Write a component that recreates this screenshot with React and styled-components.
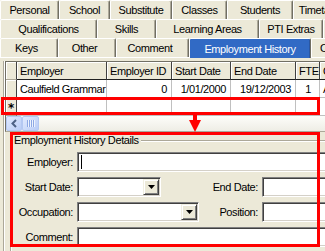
import styled, { createGlobalStyle } from 'styled-components';

const GlobalStyle = createGlobalStyle`
    html, body {
        margin: 0;
        padding: 0;
        background: #ECE9D8;
    }
    body {
        font-family: "Liberation Sans", Arial, sans-serif;
        font-size: 11px;
        letter-spacing: -0.4px;
        color: #000;
    }
    * {
        box-sizing: border-box;
    }
`;

const Screen = styled.div`
    position: relative;
    width: 325px;
    height: 251px;
    overflow: hidden;
    background: #ECE9D8;
`;

const TabStrip = styled.div`
    display: flex;
    flex-direction: column;
    width: 420px;
`;

const TabRow = styled.div`
    display: flex;
    height: 19px;
`;

const Tab = styled.div`
    flex: none;
    width: ${p => p.$w}px;
    height: ${p => p.$active ? 20 : 19}px;
    display: flex;
    align-items: center;
    justify-content: center;
    padding-right: ${p => p.$pr || 0}px;
    white-space: nowrap;
    overflow: hidden;
    background: ${p => p.$active ? '#316AC5' : '#ECE9D8'};
    color: ${p => p.$active ? '#fff' : '#000'};
    border-top: 1px solid #fff;
    border-left: 1px solid #fff;
    border-right: 1px solid #716F64;
    box-shadow: inset -1px 0 ${p => p.$active ? '#2A57A3' : '#ACA899'};
    border-radius: 2px 2px 0 0;
    position: relative;
    z-index: ${p => p.$active ? 1 : 0};
`;

const Panel = styled.div`
    border-top: 1px solid #fff;
    padding: 3px 0 0 3px;
`;

const Page = styled.div`
    border-left: 1px solid #ACA899;
    box-shadow: inset 1px 0 #fff;
    padding-left: 1px;
    height: 200px;
`;

const Sheet = styled.div`
    width: 420px;
    border-top: 1px solid #716F64;
    border-left: 1px solid #716F64;
    border-bottom: 1px solid #ACA899;
    background: #fff;
`;

const SheetRow = styled.div`
    display: grid;
    grid-template-columns: 11px 90px 65px 59px 65px 24px 80px;
    height: 18px;
`;

const HeadCell = styled.div`
    display: flex;
    align-items: center;
    padding-left: 3px;
    white-space: nowrap;
    overflow: hidden;
    background: #ECE9D8;
    border-right: 1px solid #404040;
    border-bottom: 1px solid #202020;
    box-shadow: inset 1px 1px #fff;
`;

const RowHead = styled.div`
    display: flex;
    align-items: center;
    justify-content: center;
    background: #ECE9D8;
    border-right: 1px solid #404040;
    border-bottom: 1px solid #ACA899;
    box-shadow: inset 1px 1px #fff;
    font-family: "DejaVu Sans", sans-serif;
    font-weight: bold;
    font-size: 12px;
    padding-top: 2px;
`;

const Cell = styled.div`
    display: flex;
    align-items: center;
    justify-content: ${p => p.$right ? 'flex-end' : 'flex-start'};
    padding: ${p => p.$right ? `0 ${p.$pr || 4}px 0 0` : '0 0 0 3px'};
    white-space: nowrap;
    overflow: hidden;
    border-right: 1px solid #C0C0C0;
    border-bottom: 1px solid #C0C0C0;
`;

const HScroll = styled.div`
    display: flex;
    height: 15px;
    background: linear-gradient(to bottom, #FDFDFA, #EEEDE5);
`;

const ScrollPart = styled.div`
    flex: none;
    width: ${p => p.$w}px;
    height: 15px;
    display: flex;
    align-items: center;
    justify-content: center;
    border: 1px solid #B4C8F2;
    border-radius: 2px;
    background: linear-gradient(135deg, #E1EAFE, #B9CCF6);
`;

const Group = styled.fieldset`
    width: 360px;
    margin: 2px 0 0 5px;
    padding: 5px 0 0 0;
    min-width: 0;
    border: 1px solid #ACA899;
    box-shadow: inset 1px 1px #fff, 1px 1px #fff;
    height: 120px;
`;

const Legend = styled.legend`
    margin-left: 1px;
    padding: 0 2px;
    line-height: 13px;
    background: #ECE9D8;
`;

const Form = styled.div`
    display: flex;
    flex-direction: column;
    gap: 5px;
`;

const FormRow = styled.div`
    display: flex;
    align-items: center;
    gap: 4px;
    height: 20px;
`;

const Label = styled.div`
    flex: none;
    width: ${p => p.$w}px;
    text-align: right;
    white-space: nowrap;
`;

const Field = styled.div`
    flex: ${p => p.$w ? 'none' : '1'};
    width: ${p => p.$w ? `${p.$w}px` : 'auto'};
    height: 20px;
    display: flex;
    align-items: center;
    justify-content: ${p => p.$combo ? 'flex-end' : 'flex-start'};
    padding: 1px;
    background: #fff;
    border: 1px solid;
    border-color: #808080 #fff #fff #808080;
    box-shadow: inset 1px 1px #404040, inset -1px -1px #D4D0C8;
`;

const Caret = styled.div`
    width: 1px;
    height: 14px;
    margin-left: 2px;
    background: #000;
`;

const DropButton = styled.div`
    width: 16px;
    height: 16px;
    display: flex;
    align-items: center;
    justify-content: center;
    background: #ECE9D8;
    border: 1px solid;
    border-color: #F1EFE2 #404040 #404040 #F1EFE2;
    box-shadow: inset 1px 1px #fff, inset -1px -1px #808080;
`;

const Callout = styled.div`
    position: absolute;
    left: ${p => p.$x}px;
    top: ${p => p.$y}px;
    width: ${p => p.$w}px;
    height: ${p => p.$h}px;
    border: 3px solid #FF0000;
    pointer-events: none;
`;

const Arrow = styled.svg`
    position: absolute;
    left: 188px;
    top: 114px;
`;

const tabRows = [
    [['Personal', 59], ['School', 51], ['Substitute', 62], ['Classes', 55], ['Students', 66], ['Timetable', 56]],
    [['Qualifications', 97], ['Skills', 59], ['Learning Areas', 103], ['PTI Extras', 64], ['Reports', 60]],
    [['Keys', 58], ['Other', 58], ['Comment', 73], ['Employment History', 122], ['Options', 58]],
];

const columns = ['Employer', 'Employer ID', 'Start Date', 'End Date', 'FTE', 'Occupation'];

function Combo({ w }) {
    return (
        <Field $w={w} $combo>
            <DropButton>
                <svg width="7" height="4" viewBox="0 0 7 4">
                    <path d="M0 0H7L3.5 4Z" fill="#000" />
                </svg>
            </DropButton>
        </Field>
    );
}

function App() {
    return (
        <Screen>
            <GlobalStyle />
            <TabStrip>
                {tabRows.map((row, r) => (
                    <TabRow key={r}>
                        {row.map(([name, w]) => (
                            <Tab key={name} $w={w} $active={name === 'Employment History'} $pr={r === 2 && name !== 'Employment History' ? 5 : 0}>
                                {name}
                            </Tab>
                        ))}
                    </TabRow>
                ))}
            </TabStrip>
            <Panel>
                <Page>
                    <Sheet>
                        <SheetRow>
                            <RowHead />
                            {columns.map(c => <HeadCell key={c}>{c}</HeadCell>)}
                        </SheetRow>
                        <SheetRow>
                            <RowHead />
                            <Cell>Caulfield Grammar</Cell>
                            <Cell $right>0</Cell>
                            <Cell $right>1/01/2000</Cell>
                            <Cell $right>19/12/2003</Cell>
                            <Cell $right $pr={8}>1</Cell>
                            <Cell>Assistant</Cell>
                        </SheetRow>
                        <SheetRow>
                            <RowHead>*</RowHead>
                            <Cell />
                            <Cell />
                            <Cell />
                            <Cell />
                            <Cell />
                            <Cell />
                        </SheetRow>
                        <HScroll>
                            <ScrollPart $w={16}>
                                <svg width="8" height="9" viewBox="0 0 8 9">
                                    <path d="M6 1L2.5 4.5L6 8" stroke="#4D6185" strokeWidth="2" fill="none" />
                                </svg>
                            </ScrollPart>
                            <ScrollPart $w={17}>
                                <svg width="8" height="7" viewBox="0 0 8 7">
                                    <path d="M0.5 0V7M2.5 0V7M4.5 0V7M6.5 0V7" stroke="#8DA8E4" strokeWidth="1" />
                                    <path d="M1.5 0V7M3.5 0V7M5.5 0V7M7.5 0V7" stroke="#EEF3FE" strokeWidth="1" />
                                </svg>
                            </ScrollPart>
                        </HScroll>
                    </Sheet>
                    <Group>
                        <Legend>Employment History Details</Legend>
                        <Form>
                            <FormRow>
                                <Label $w={62}>Employer:</Label>
                                <Field><Caret /></Field>
                            </FormRow>
                            <FormRow>
                                <Label $w={62}>Start Date:</Label>
                                <Combo w={84} />
                                <Label $w={93}>End Date:</Label>
                                <Field />
                            </FormRow>
                            <FormRow>
                                <Label $w={62}>Occupation:</Label>
                                <Combo w={122} />
                                <Label $w={55}>Position:</Label>
                                <Field />
                            </FormRow>
                            <FormRow>
                                <Label $w={62}>Comment:</Label>
                                <Field />
                            </FormRow>
                        </Form>
                    </Group>
                </Page>
            </Panel>
            <Callout $x={1} $y={97} $w={319} $h={18} />
            <Arrow width="14" height="19" viewBox="0 0 14 19">
                <path d="M5 0H9V7H5Z" fill="#FF0000" />
                <path d="M1 6H13L7 18Z" fill="#FF0000" />
            </Arrow>
            <Callout $x={10} $y={132} $w={310} $h={115} />
        </Screen>
    );
}

export default App;
